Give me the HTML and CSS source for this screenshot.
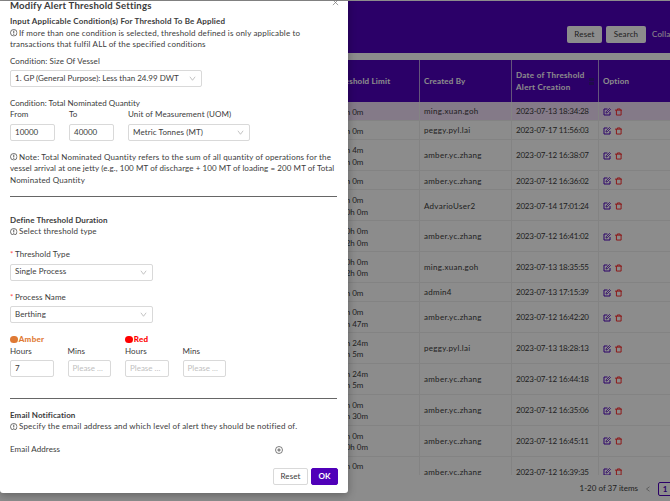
FILE: index.html
```
<!DOCTYPE html>
<html lang="en">
<head>
<meta charset="utf-8">
<title>Alert Threshold Settings</title>
<link rel="stylesheet" href="styles.css">
</head>
<body>
<svg class="defs" aria-hidden="true">
  <symbol id="edit" viewBox="0 0 16 16"><path d="M9 2H2v12h12V8" fill="none" stroke="currentColor" stroke-width="2"/><path d="M6 10l.4-2.400L13 1l2 2-6.600 6.600z" fill="none" stroke="currentColor" stroke-width="1.600"/></symbol>
  <symbol id="trash" viewBox="0 0 16 16"><path d="M0 4h16M5 4V1.500h6V4M3 4v10.500h10V4" fill="none" stroke="currentColor" stroke-width="2"/></symbol>
  <symbol id="info" viewBox="0 0 16 16"><circle cx="8" cy="8" r="7" fill="none" stroke="currentColor" stroke-width="1.500"/><path d="M8 3.500v6M8 11v2" stroke="currentColor" stroke-width="1.800"/></symbol>
  <symbol id="down" viewBox="0 0 8 8"><path d="M1 2l3 4 3-4" fill="none" stroke="currentColor" stroke-width=".8"/></symbol>
</svg>
<main class="page">
  <header class="toolbar"><span class="tool">Reset</span><span class="tool search">Search</span><span class="collapse">Collapse</span></header>
  <section class="table" id="table">
    <div class="row head"><div class="limit">Threshold Limit</div><div>Created By</div><div class="date">Date of Threshold<br>Alert Creation<i class="sorter"></i></div><div>Option</div></div>
  </section>
  <footer class="pager"><span class="total">1-20 of 37 items</span><svg class="prev" viewBox="0 0 8 8"><path d="M6 1L2 4l4 3" fill="none" stroke="currentColor" stroke-width=".8"/></svg><b class="current">1</b></footer>
</main>
<div class="mask"></div>
<section class="modal">
  <svg class="close" viewBox="0 0 8 8"><path d="M1 1l6 6M7 1L1 7" stroke="currentColor" stroke-width=".8"/></svg>
  <h1>Modify Alert Threshold Settings</h1>
  <h2>Input Applicable Condition(s) For Threshold To Be Applied</h2>
  <p><svg class="info"><use href="#info"/></svg>If more than one condition is selected, threshold defined is only applicable to<br>transactions that fulfil ALL of the specified conditions</p>
  <label class="vessel">Condition: Size Of Vessel</label>
  <div class="select wide"><span>1. GP (General Purpose): Less than 24.99 DWT</span><svg><use href="#down"/></svg></div>
  <label class="quantity">Condition: Total Nominated Quantity</label>
  <div class="range">
    <div class="field"><label>From</label><div class="input">10000</div></div>
    <div class="field"><label>To</label><div class="input">40000</div></div>
    <div class="field"><label>Unit of Measurement (UOM)</label><div class="select unit"><span>Metric Tonnes (MT)</span><svg><use href="#down"/></svg></div></div>
  </div>
  <p class="note"><svg class="info"><use href="#info"/></svg>Note: Total Nominated Quantity refers to the sum of all quantity of operations for the<br><span class="example">vessel arrival at one jetty (e.g., 100 MT of discharge + 100 MT of loading = 200 MT of Total</span><br>Nominated Quantity</p>
  <hr>
  <h2 class="duration">Define Threshold Duration</h2>
  <p><svg class="info"><use href="#info"/></svg>Select threshold type</p>
  <label class="required type">Threshold Type</label>
  <div class="select"><span>Single Process</span><svg><use href="#down"/></svg></div>
  <label class="required name">Process Name</label>
  <div class="select"><span>Berthing</span><svg><use href="#down"/></svg></div>
  <div class="levels">
    <div class="level amber"><strong><i></i>Amber</strong><div class="pair"><div class="field"><label>Hours</label><div class="input">7</div></div><div class="field"><label>Mins</label><div class="input empty">Please ...</div></div></div></div>
    <div class="level red"><strong><i></i>Red</strong><div class="pair"><div class="field"><label>Hours</label><div class="input empty">Please ...</div></div><div class="field"><label>Mins</label><div class="input empty">Please ...</div></div></div></div>
  </div>
  <hr class="second">
  <h2 class="email">Email Notification</h2>
  <p><svg class="info"><use href="#info"/></svg>Specify the email address and which level of alert they should be notified of.</p>
  <div class="address"><label>Email Address</label><svg viewBox="0 0 16 16"><circle cx="8" cy="8" r="7" fill="none" stroke="currentColor" stroke-width="1.300"/><path d="M8 4.500v7M4.500 8h7" stroke="currentColor" stroke-width="1.500"/></svg></div>
  <div class="actions"><span class="button">Reset</span><span class="button primary">OK</span></div>
</section>
<script src="rows.js"></script>
</body>
</html>
```
FILE: rows.js
```
const rows = [
  [["0h 0m"], "ming.xuan.goh", "2023-07-13 18:34:28"],
  [["0h 0m"], "peggy.pyl.lai", "2023-07-17 11:56:03"],
  [["0h 4m", "0h 0m"], "amber.yc.zhang", "2023-07-12 16:38:07"],
  [["0h 0m"], "amber.yc.zhang", "2023-07-12 16:36:02"],
  [["0h 0m", "10h 0m"], "AdvarioUser2", "2023-07-14 17:01:24"],
  [["10h 0m", "12h 0m"], "amber.yc.zhang", "2023-07-12 16:41:02"],
  [["10h 0m", "12h 0m"], "ming.xuan.goh", "2023-07-13 18:35:55"],
  [["0h 0m"], "admin4", "2023-07-13 17:15:39"],
  [["0h 0m", "0h 47m"], "amber.yc.zhang", "2023-07-12 16:42:20"],
  [["0h 24m", "0h 5m"], "peggy.pyl.lai", "2023-07-13 18:28:13"],
  [["0h 24m", "0h 5m"], "amber.yc.zhang", "2023-07-12 16:44:18"],
  [["0h 0m", "0h 30m"], "amber.yc.zhang", "2023-07-12 16:35:06"],
  [["0h 0m", "10h 0m"], "amber.yc.zhang", "2023-07-12 16:45:11"],
  [["0h 0m", "10h 0m"], "amber.yc.zhang", "2023-07-12 16:39:35"]
];
document.getElementById("table").insertAdjacentHTML("beforeend", rows.map(([limits, user, date], i) =>
  `<div class="row${limits.length > 1 ? " tall" : ""}${i === 0 ? " active" : ""}"><div class="limit">${limits.map(v => `<span>${v}</span>`).join("<br>")}</div><div class="user">${user}</div><div class="time">${date}</div><div class="icons"><svg class="edit"><use href="#edit"/></svg><svg class="trash"><use href="#trash"/></svg></div></div>`).join(""));
```
FILE: styles.css
```
* { box-sizing: border-box; }
html, body { margin: 0; height: 100%; overflow: hidden; }
body { font-family: Lato, "Liberation Sans", sans-serif; font-size: 8px; line-height: 11.7px; color: #3b3b3b; position: relative; background: #fff; }
.defs { position: absolute; width: 0; height: 0; }
.page { height: 501px; padding-top: 1px; display: flex; flex-direction: column; }
.toolbar { height: 52px; background: #4f00bd; padding: 25px 0 0 567px; display: flex; align-items: flex-start; white-space: nowrap; flex: none; letter-spacing: .15px; }
.tool { width: 35px; height: 16.5px; line-height: 16.5px; background: #fff; border-radius: 2px; text-align: center; margin-right: 4px; flex: none; }
.search { width: 40px; margin-right: 6px; }
.collapse { color: #fff; line-height: 16.5px; }
.table { margin-top: 7px; height: 415px; overflow: hidden; flex: none; }
.row { display: grid; grid-template-columns: 72px 92px 87px 72px; margin-left: 348px; height: 19.2px; border-bottom: 1px solid #eee; }
.row > div { border-right: 1px solid #eee; padding: 2px 0 0 4px; display: flex; align-items: center; white-space: nowrap; }
.row > .limit { padding: 4.5px 0 0; display: block; }
.limit span { margin-left: -7px; }
.row > .user { letter-spacing: .28px; }
.row > .time { letter-spacing: -.22px; }
.tall { height: 30.92px; }
.head { height: 42px; background: #4f00bd; color: #fff; font-weight: 700; border: 0; letter-spacing: .2px; }
.row.head > div { border-color: #b79be0; }
.row.head > .limit { padding-top: 16px; margin-left: -16px; }
.row > .date { position: relative; letter-spacing: .3px; }
.sorter { position: absolute; right: 4px; top: 18px; width: 5px; height: 7px; background: linear-gradient(#3b168a 3px, transparent 3px, transparent 4px, #3b168a 4px); }
.active { background: #f0def8; }
.row > .icons { gap: 3.5px; color: #4f00bd; padding-top: 1px; }
.icons svg { width: 8px; height: 8px; }
.icons .trash { width: 7.5px; color: #ff2222; }
.pager { height: 26px; padding: 1px 0 0 579.5px; display: flex; align-items: center; white-space: nowrap; }
.total { width: 57.5px; }
.prev { width: 6px; height: 8px; margin: 0 7px 0 8px; color: #777; flex: none; }
.current { flex: none; width: 14px; height: 14px; line-height: 12px; border: 1px solid #4f00bd; border-radius: 2px; color: #4f00bd; text-align: center; }
.mask { position: absolute; inset: 0; background: rgba(0, 0, 0, .45); }
.modal { position: absolute; left: 0; top: 1px; width: 348px; height: 492px; background: #fff; border-radius: 0 0 3px 3px; padding: 0 10px; white-space: nowrap; box-shadow: 0 2px 9px rgba(0, 0, 0, .3); letter-spacing: .1px; }
.modal h1, .modal h2, .modal p { margin: 0; }
.modal h1 { font-size: 9.6px; line-height: 12px; margin-top: -1px; height: 16px; letter-spacing: .2px; }
.modal h2 { font-size: 8px; font-weight: 700; height: 11.7px; letter-spacing: .2px; }
.modal p { letter-spacing: .165px; }
.modal .example { letter-spacing: .08px; }
.modal label { display: block; height: 11.7px; }
.close { position: absolute; right: 9px; top: -2px; width: 7px; height: 7px; color: #777; }
.info { width: 7.5px; height: 7.5px; margin-right: 1.5px; vertical-align: -1px; }
.modal .vessel { margin-top: 4.5px; }
.select { display: flex; align-items: center; justify-content: space-between; width: 143px; height: 17px; border: 1px solid #d9d9d9; border-radius: 2px; padding: 0 5px 0 4px; background: #fff; }
.select svg { width: 7px; height: 7px; color: #aaa; }
.wide { width: 192px; margin-top: 3px; letter-spacing: 0; }
.modal .quantity { margin-top: 10.5px; letter-spacing: .02px; }
.range { display: flex; gap: 14px; }
.input { width: 45px; height: 17px; line-height: 15px; border: 1px solid #d9d9d9; border-radius: 2px; padding-left: 4px; letter-spacing: 0; }
.field label { margin-bottom: 3px; }
.unit { width: 122px; }
.modal .note { margin-top: 10.5px; }
hr { margin: 9.5px 0 0; border: 0; height: 1px; background: #666; width: 327px; }
.modal .duration { margin-top: 17.5px; letter-spacing: .12px; }
.modal .type { margin-top: 11px; margin-bottom: 3px; }
.modal .name { margin-top: 10.8px; margin-bottom: 3px; }
.required::before { content: "*"; color: #ff4d4f; margin-right: 1.5px; }
.levels { display: flex; gap: 14px; margin-top: 10.5px; }
.pair { display: flex; gap: 14px; }
.levels .input { width: 43.5px; }
.level strong { display: flex; align-items: center; height: 11.7px; font-weight: 900; letter-spacing: .3px; }
.level i { width: 7.5px; height: 7.5px; border-radius: 50%; background: currentColor; margin-right: 1.2px; }
.amber strong { color: #df7a35; }
.red strong { color: #f00; }
.empty { color: #bfbfbf; }
.second { margin-top: 21px; }
.modal .email { margin-top: 10.5px; letter-spacing: .1px; }
.address { display: flex; align-items: center; margin-top: 11px; }
.address label { width: 265px; }
.address svg { width: 8px; height: 8px; }
.actions { display: flex; gap: 3px; justify-content: flex-end; margin-top: 12px; }
.button { width: 35px; height: 17px; border: 1px solid #d9d9d9; border-radius: 2px; line-height: 15px; text-align: center; }
.primary { width: 27px; background: #5000b9; border-color: #5000b9; color: #fff; font-weight: 700; }
```
